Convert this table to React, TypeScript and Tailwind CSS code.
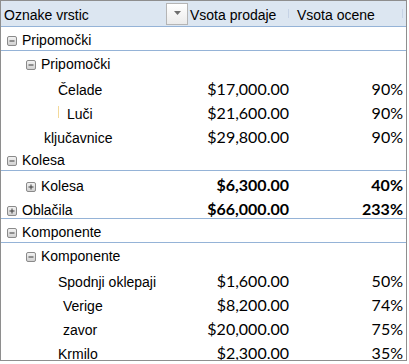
import React from "react";

type Row = {
  label: string;
  pad: string;
  icon?: "minus" | "plus";
  sales?: string;
  pct?: string;
  bold?: boolean;
  border?: boolean;
  mark?: boolean;
};

const rows: Row[] = [
  { label: "Pripomočki", pad: "pl-[6px]", icon: "minus", border: true },
  { label: "Pripomočki", pad: "pl-[25px]", icon: "minus" },
  { label: "Čelade", pad: "pl-[57px]", sales: "$17,000.00", pct: "90%" },
  { label: "Luči", pad: "pl-[66px]", sales: "$21,600.00", pct: "90%", mark: true },
  { label: "ključavnice", pad: "pl-[43px]", sales: "$29,800.00", pct: "90%" },
  { label: "Kolesa", pad: "pl-[6px]", icon: "minus", border: true },
  { label: "Kolesa", pad: "pl-[25px]", icon: "plus", sales: "$6,300.00", pct: "40%", bold: true },
  { label: "Oblačila", pad: "pl-[6px]", icon: "plus", sales: "$66,000.00", pct: "233%", bold: true, border: true },
  { label: "Komponente", pad: "pl-[6px]", icon: "minus", border: true },
  { label: "Komponente", pad: "pl-[25px]", icon: "minus" },
  { label: "Spodnji oklepaji", pad: "pl-[57px]", sales: "$1,600.00", pct: "50%" },
  { label: "Verige", pad: "pl-[62px]", sales: "$8,200.00", pct: "74%" },
  { label: "zavor", pad: "pl-[62px]", sales: "$20,000.00", pct: "75%" },
  { label: "Krmilo", pad: "pl-[57px]", sales: "$2,300.00", pct: "35%" },
];

function ToggleIcon({ kind }: { kind: "minus" | "plus" }) {
  return (
    <svg width="10" height="10" viewBox="0 0 10 10" className="inline-block mr-[5px]">
      <defs>
        <linearGradient id={`g-${kind}`} x1="0" y1="0" x2="0" y2="1">
          <stop offset="0" stopColor="#f4f4f4" />
          <stop offset="1" stopColor="#cfcfcf" />
        </linearGradient>
      </defs>
      <rect x="0.5" y="0.5" width="9" height="9" rx="1.5" fill={`url(#g-${kind})`} stroke="#8a8a8a" />
      <line x1="2.5" y1="5" x2="7.5" y2="5" stroke="#3a3a3a" strokeWidth="1" />
      {kind === "plus" && <line x1="5" y1="2.5" x2="5" y2="7.5" stroke="#3a3a3a" strokeWidth="1" />}
    </svg>
  );
}

export default function App() {
  const label = { fontFamily: '"Liberation Sans", Arial, sans-serif' };
  const num = { fontFamily: 'Lato, "Open Sans", sans-serif' };
  return (
    <div className="w-[409px] h-[364px] bg-white">
      <div className="w-[407px] h-[361px] border border-[#8e8e8e] overflow-hidden bg-white text-black">
        <div
          className="flex h-[26px] bg-[#dce6f1] border-b border-[#95b3d7] text-[14px]"
          style={label}
        >
          <div className="w-[187px] flex items-start justify-between">
            <span className="pl-[3px] pt-[4px] leading-[21px]">Oznake vrstic</span>
            <div className="mt-[2px] w-[22px] h-[22px] border border-[#b5b5b5] bg-gradient-to-b from-white to-[#ebebeb] flex items-center justify-center">
              <svg width="7" height="4" viewBox="0 0 7 4" className="mb-[2px]">
                <polygon points="0,0 7,0 3.5,4" fill="#6e6e6e" />
              </svg>
            </div>
          </div>
          <div className="w-[101px] flex items-start">
            <span className="pl-[2px] pt-[4px] leading-[21px]">Vsota prodaje</span>
            <span className="ml-auto mt-[8px] w-px h-[9px] bg-[#c6d3e6]" />
          </div>
          <div className="w-[114px] flex items-start">
            <span className="pl-[8px] pt-[4px] leading-[21px]">Vsota ocene</span>
            <span className="ml-auto mt-[8px] w-px h-[9px] bg-[#c6d3e6]" />
          </div>
        </div>
        {rows.map((r, i) => (
          <div
            key={i}
            className={`flex items-baseline h-6 pt-[3px] ${r.border ? "border-b border-[#95b3d7]" : ""}`}
          >
            <div className={`w-[187px] ${r.pad} text-[14px] leading-[21px] relative`} style={label}>
              {r.mark && (
                <span className="absolute left-[57px] top-[2px] w-px h-[12px] bg-[#f3d99a]" />
              )}
              {r.icon && <ToggleIcon kind={r.icon} />}
              {r.label}
            </div>
            <div
              className={`w-[101px] text-right text-[16px] leading-[21px] ${r.bold ? "font-bold" : ""}`}
              style={num}
            >
              {r.sales ?? ""}
            </div>
            <div
              className={`w-[114px] text-right text-[16px] leading-[21px] ${r.bold ? "font-bold" : ""}`}
              style={num}
            >
              {r.pct ?? ""}
            </div>
          </div>
        ))}
      </div>
    </div>
  );
}
